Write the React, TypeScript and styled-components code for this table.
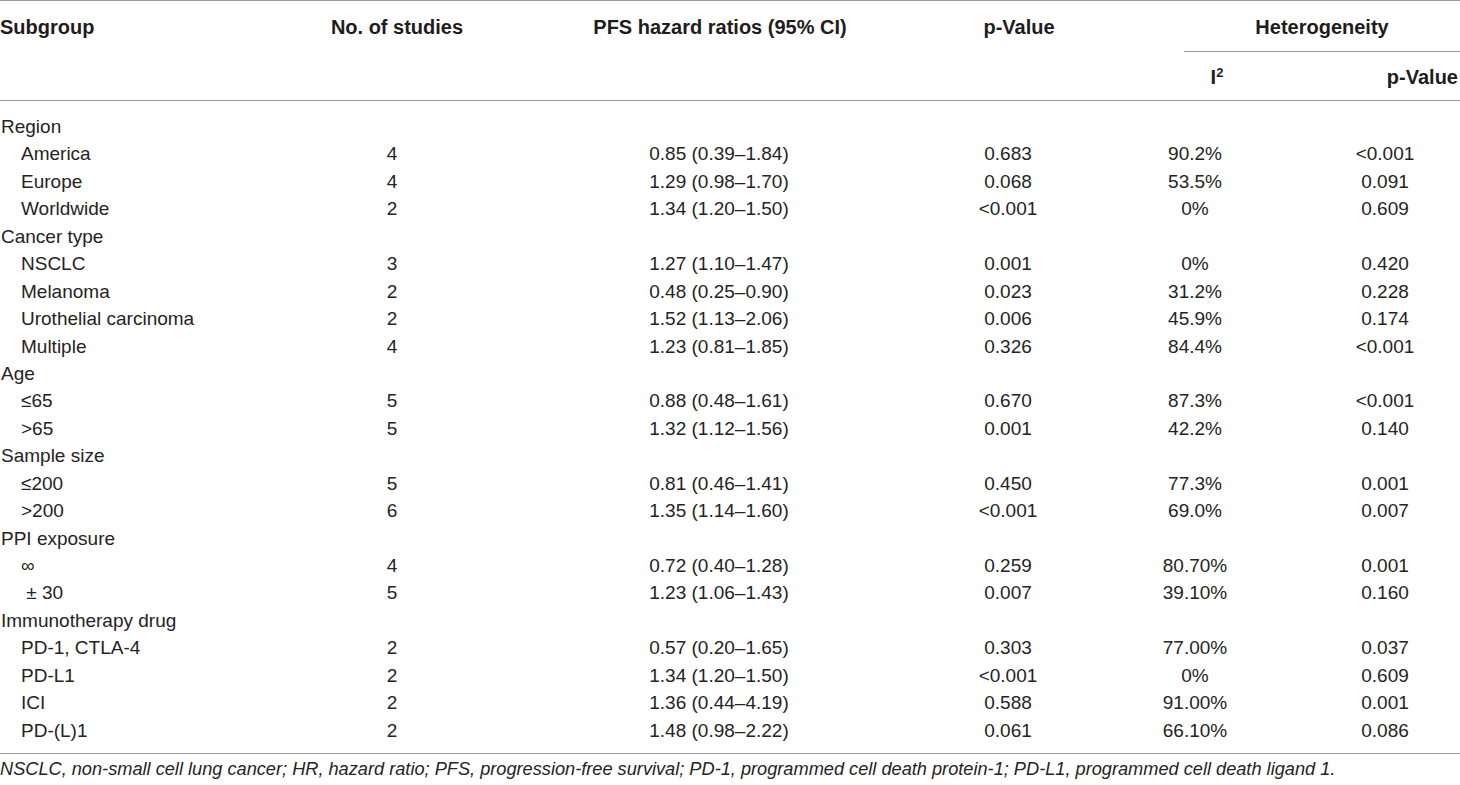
import React from "react";
import styled, { createGlobalStyle } from "styled-components";

type Row = {
  label: string;
  sub?: boolean;
  n?: string;
  hr?: string;
  p?: string;
  i2?: string;
  hp?: string;
};

const rows: Row[] = [
  { label: "Region" },
  { label: "America", sub: true, n: "4", hr: "0.85 (0.39–1.84)", p: "0.683", i2: "90.2%", hp: "<0.001" },
  { label: "Europe", sub: true, n: "4", hr: "1.29 (0.98–1.70)", p: "0.068", i2: "53.5%", hp: "0.091" },
  { label: "Worldwide", sub: true, n: "2", hr: "1.34 (1.20–1.50)", p: "<0.001", i2: "0%", hp: "0.609" },
  { label: "Cancer type" },
  { label: "NSCLC", sub: true, n: "3", hr: "1.27 (1.10–1.47)", p: "0.001", i2: "0%", hp: "0.420" },
  { label: "Melanoma", sub: true, n: "2", hr: "0.48 (0.25–0.90)", p: "0.023", i2: "31.2%", hp: "0.228" },
  { label: "Urothelial carcinoma", sub: true, n: "2", hr: "1.52 (1.13–2.06)", p: "0.006", i2: "45.9%", hp: "0.174" },
  { label: "Multiple", sub: true, n: "4", hr: "1.23 (0.81–1.85)", p: "0.326", i2: "84.4%", hp: "<0.001" },
  { label: "Age" },
  { label: "≤65", sub: true, n: "5", hr: "0.88 (0.48–1.61)", p: "0.670", i2: "87.3%", hp: "<0.001" },
  { label: ">65", sub: true, n: "5", hr: "1.32 (1.12–1.56)", p: "0.001", i2: "42.2%", hp: "0.140" },
  { label: "Sample size" },
  { label: "≤200", sub: true, n: "5", hr: "0.81 (0.46–1.41)", p: "0.450", i2: "77.3%", hp: "0.001" },
  { label: ">200", sub: true, n: "6", hr: "1.35 (1.14–1.60)", p: "<0.001", i2: "69.0%", hp: "0.007" },
  { label: "PPI exposure" },
  { label: "∞", sub: true, n: "4", hr: "0.72 (0.40–1.28)", p: "0.259", i2: "80.70%", hp: "0.001" },
  { label: " ± 30", sub: true, n: "5", hr: "1.23 (1.06–1.43)", p: "0.007", i2: "39.10%", hp: "0.160" },
  { label: "Immunotherapy drug" },
  { label: "PD-1, CTLA-4", sub: true, n: "2", hr: "0.57 (0.20–1.65)", p: "0.303", i2: "77.00%", hp: "0.037" },
  { label: "PD-L1", sub: true, n: "2", hr: "1.34 (1.20–1.50)", p: "<0.001", i2: "0%", hp: "0.609" },
  { label: "ICI", sub: true, n: "2", hr: "1.36 (0.44–4.19)", p: "0.588", i2: "91.00%", hp: "0.001" },
  { label: "PD-(L)1", sub: true, n: "2", hr: "1.48 (0.98–2.22)", p: "0.061", i2: "66.10%", hp: "0.086" },
];

const GlobalStyle = createGlobalStyle`
  body {
    margin: 0;
    background: #ffffff;
  }
`;

const COLS = "300px 184px 470px 108px 266px 132px";
const RULE = "#9c9c9c";

const App: React.FC = () => {
  return (
    <Page>
      <GlobalStyle />
      <Table>
        <Head>
          <HeadCell $col="1" $row="1" $align="left">
            Subgroup
          </HeadCell>
          <HeadCell $col="2" $row="1" $shift={10}>
            No. of studies
          </HeadCell>
          <HeadCell $col="3" $row="1" $shift={2}>
            PFS hazard ratios (95% CI)
          </HeadCell>
          <HeadCell $col="4" $row="1" $shift={22}>
            p-Value
          </HeadCell>
          <Hetero>Heterogeneity</Hetero>
          <SubHeadCell $col="5" $shift={44}>
            I<sup>2</sup>
          </SubHeadCell>
          <SubHeadCell $col="6" $align="right">
            p-Value
          </SubHeadCell>
        </Head>
        <Body>
          {rows.map((r) => (
            <DataRow key={r.label}>
              <Label $sub={!!r.sub}>{r.label}</Label>
              <Cell>{r.n}</Cell>
              <Cell>{r.hr}</Cell>
              <Cell>{r.p}</Cell>
              <Cell>{r.i2}</Cell>
              <Cell $shift={-18}>{r.hp}</Cell>
            </DataRow>
          ))}
        </Body>
      </Table>
      <Footnote>
        NSCLC, non-small cell lung cancer; HR, hazard ratio; PFS, progression-free survival; PD-1, programmed cell
        death protein-1; PD-L1, programmed cell death ligand 1.
      </Footnote>
    </Page>
  );
};

export default App;

const Page = styled.div`
  width: 1460px;
  font-family: "Liberation Sans", Arial, Helvetica, sans-serif;
  color: #262324;
`;

const Table = styled.div`
  border-top: 1px solid ${RULE};
  border-bottom: 1px solid ${RULE};
`;

const Head = styled.div`
  display: grid;
  grid-template-columns: ${COLS};
  grid-template-rows: 51px 48px;
  border-bottom: 1px solid ${RULE};
  font-weight: bold;
  font-size: 20px;
  line-height: 24px;
  color: #1f1c1d;
`;

const HeadCell = styled.div<{ $col: string; $row: string; $align?: string; $shift?: number }>`
  grid-column: ${(p) => p.$col};
  grid-row: ${(p) => p.$row};
  text-align: ${(p) => p.$align || "center"};
  padding-top: 14px;
  padding-left: ${(p) => (p.$shift && p.$shift > 0 ? p.$shift : 0)}px;
  white-space: nowrap;
`;

const Hetero = styled.div`
  grid-column: 5 / 7;
  grid-row: 1;
  margin-left: 122px;
  padding-top: 14px;
  text-align: center;
  border-bottom: 1px solid ${RULE};
`;

const SubHeadCell = styled.div<{ $col: string; $align?: string; $shift?: number }>`
  grid-column: ${(p) => p.$col};
  grid-row: 2;
  text-align: ${(p) => p.$align || "center"};
  padding-top: 13px;
  padding-left: ${(p) => p.$shift || 0}px;
  padding-right: ${(p) => (p.$align === "right" ? 2 : 0)}px;

  sup {
    font-size: 13px;
    line-height: 0;
    vertical-align: 7px;
  }
`;

const Body = styled.div`
  padding: 12px 0 9px;
  font-size: 19px;
`;

const DataRow = styled.div`
  display: grid;
  grid-template-columns: ${COLS};
  height: 27.44px;
  line-height: 27.44px;
`;

const Label = styled.div<{ $sub: boolean }>`
  padding-left: ${(p) => (p.$sub ? 21 : 1)}px;
  white-space: pre;
`;

const Cell = styled.div<{ $shift?: number }>`
  text-align: center;
  white-space: nowrap;
  padding-right: ${(p) => (p.$shift && p.$shift < 0 ? -p.$shift : 0)}px;
`;

const Footnote = styled.div`
  padding-top: 3px;
  font-size: 18.2px;
  line-height: 24px;
  font-style: italic;
  white-space: nowrap;
`;
